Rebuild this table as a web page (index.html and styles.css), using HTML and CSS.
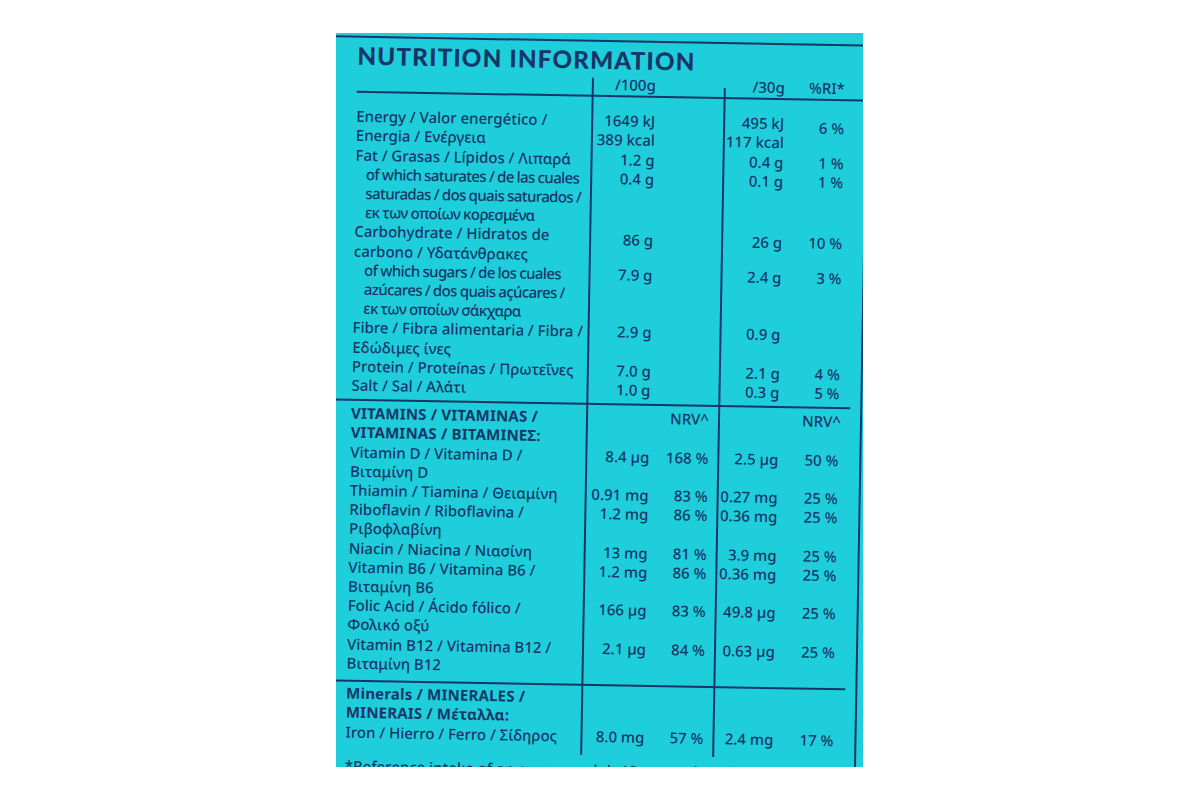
FILE: index.html
```html
<!DOCTYPE html>
<html lang="en">
<head>
<meta charset="utf-8">
<title>Nutrition information</title>
<link rel="stylesheet" href="styles.css">
</head>
<body>
<div class="panel">
  <div class="sheet">
    <div class="topline"></div>
    <h1 class="title">NUTRITION INFORMATION</h1>
    <div class="table">
      <div class="row head">
        <div class="a">/100g</div>
        <div class="b">/30g</div>
        <div class="c">%RI*</div>
      </div>

      <div class="section">
        <div class="row">
          <div class="label">Energy / Valor energético /<br>Energia / Ενέργεια</div>
          <div class="a">1649 kJ<br>389 kcal</div>
          <div class="b">495 kJ<br>117 kcal</div>
          <div class="c down3">6 %</div>
        </div>
        <div class="row">
          <div class="label">Fat / Grasas / Lípidos / Λιπαρά</div>
          <div class="a">1.2 g</div>
          <div class="b">0.4 g</div>
          <div class="c">1 %</div>
        </div>
        <div class="row">
          <div class="label sub">of which saturates / de las cuales<br>saturadas / dos quais saturados /<br>εκ των οποίων κορεσμένα</div>
          <div class="a">0.4 g</div>
          <div class="b">0.1 g</div>
          <div class="c">1 %</div>
        </div>
        <div class="row">
          <div class="label">Carbohydrate / Hidratos de<br>carbono / Υδατάνθρακες</div>
          <div class="a down4">86 g</div>
          <div class="b down4">26 g</div>
          <div class="c down4">10 %</div>
        </div>
        <div class="row">
          <div class="label sub">of which sugars / de los cuales<br>azúcares / dos quais açúcares /<br>εκ των οποίων σάκχαρα</div>
          <div class="a">7.9 g</div>
          <div class="b">2.4 g</div>
          <div class="c">3 %</div>
        </div>
        <div class="row">
          <div class="label">Fibre / Fibra alimentaria / Fibra /<br>Εδώδιμες ίνες</div>
          <div class="a">2.9 g</div>
          <div class="b">0.9 g</div>
        </div>
        <div class="row">
          <div class="label">Protein / Proteínas / Πρωτεΐνες</div>
          <div class="a">7.0 g</div>
          <div class="b">2.1 g</div>
          <div class="c">4 %</div>
        </div>
        <div class="row">
          <div class="label">Salt / Sal / Αλάτι</div>
          <div class="a">1.0 g</div>
          <div class="b">0.3 g</div>
          <div class="c">5 %</div>
        </div>
      </div>

      <div class="sep sep-vit"></div>

      <div class="section">
        <div class="row">
          <div class="label strong">VITAMINS / VITAMINAS /<br>VITAMINAS / ΒΙΤΑΜΙΝΕΣ:</div>
          <div class="n">NRV^</div>
          <div class="c nrv">NRV^</div>
        </div>
        <div class="row">
          <div class="label">Vitamin D / Vitamina D /<br>Βιταμίνη D</div>
          <div class="a">8.4 µg</div>
          <div class="n">168 %</div>
          <div class="b">2.5 µg</div>
          <div class="c">50 %</div>
        </div>
        <div class="row">
          <div class="label">Thiamin / Tiamina / Θειαμίνη</div>
          <div class="a">0.91 mg</div>
          <div class="n">83 %</div>
          <div class="b">0.27 mg</div>
          <div class="c">25 %</div>
        </div>
        <div class="row">
          <div class="label">Riboflavin / Riboflavina /<br>Ριβοφλαβίνη</div>
          <div class="a">1.2 mg</div>
          <div class="n">86 %</div>
          <div class="b">0.36 mg</div>
          <div class="c">25 %</div>
        </div>
        <div class="row">
          <div class="label">Niacin / Niacina / Νιασίνη</div>
          <div class="a">13 mg</div>
          <div class="n">81 %</div>
          <div class="b">3.9 mg</div>
          <div class="c">25 %</div>
        </div>
        <div class="row">
          <div class="label">Vitamin B6 / Vitamina B6 /<br>Βιταμίνη B6</div>
          <div class="a">1.2 mg</div>
          <div class="n">86 %</div>
          <div class="b">0.36 mg</div>
          <div class="c">25 %</div>
        </div>
        <div class="row">
          <div class="label">Folic Acid / Ácido fólico /<br>Φολικό οξύ</div>
          <div class="a">166 µg</div>
          <div class="n">83 %</div>
          <div class="b">49.8 µg</div>
          <div class="c">25 %</div>
        </div>
        <div class="row">
          <div class="label">Vitamin B12 / Vitamina B12 /<br>Βιταμίνη B12</div>
          <div class="a">2.1 µg</div>
          <div class="n">84 %</div>
          <div class="b">0.63 µg</div>
          <div class="c">25 %</div>
        </div>
      </div>

      <div class="sep sep-min"></div>

      <div class="section">
        <div class="row">
          <div class="label strong">Minerals / MINERALES /<br>MINERAIS / Μέταλλα:</div>
        </div>
        <div class="row">
          <div class="label">Iron / Hierro / Ferro / Σίδηρος</div>
          <div class="a">8.0 mg</div>
          <div class="n">57 %</div>
          <div class="b">2.4 mg</div>
          <div class="c">17 %</div>
        </div>
      </div>
    </div>
    <p class="footnote">*Reference intake of an average adult / Ingesta de referencia de un adulto medio (8400 kJ / 2000 kcal)</p>
  </div>
</div>
</body>
</html>
```
FILE: styles.css
```css
:root {
  --teal: #1fcedb;
  --ink: #173667;
}

* {
  box-sizing: border-box;
}

body {
  margin: 0;
  background: #ffffff;
}

.panel {
  margin: 33px 0 0 336px;
  width: 527px;
  height: 734px;
  background: var(--teal);
  overflow: hidden;
}

.sheet {
  margin: -13px -20px 0;
  height: 760px;
  transform: rotate(1deg);
  color: var(--ink);
  font-family: "Noto Sans", "DejaVu Sans", sans-serif;
  font-weight: 500;
  font-size: 15px;
  line-height: 19.2px;
  background: linear-gradient(var(--ink), var(--ink)) 544px 0 / 2px 100% no-repeat;
}

.topline {
  height: 2px;
  margin-top: 20px;
  background: var(--ink);
}

.title {
  margin: 3.6px 0 1.8px 35px;
  font-family: Lato, "Noto Sans", sans-serif;
  font-weight: 900;
  font-size: 24.3px;
  line-height: 28px;
  letter-spacing: 1.1px;
}

.table {
  padding: 0 0 9px 35px;
  background:
    linear-gradient(var(--ink), var(--ink)) 270px 3px / 2px calc(100% - 3px) no-repeat,
    linear-gradient(var(--ink), var(--ink)) 402px 11px / 2px calc(100% - 11px) no-repeat;
}

.row {
  display: grid;
  grid-template-columns: 236px 63px 59px 10px 60px 60px;
  align-items: start;
}

.head {
  padding-bottom: 0.8px;
  border-bottom: 2px solid var(--ink);
  margin-bottom: 13.8px;
}

.label {
  grid-column: 1;
  white-space: nowrap;
}

.label.sub {
  padding-left: 10.5px;
  letter-spacing: -0.6px;
  word-spacing: -0.4px;
}

.label.strong {
  font-weight: 700;
  letter-spacing: 0.2px;
}

.a,
.n,
.b,
.c {
  text-align: right;
  white-space: nowrap;
}

.a { grid-column: 2; }
.n { grid-column: 3; }
.b { grid-column: 5; }
.c { grid-column: 6; }

.c.nrv {
  margin-right: -2px;
}

.down3 { padding-top: 3.5px; }
.down4 { padding-top: 4px; }

.sep {
  height: 2px;
  width: 534px;
  margin-left: -35px;
  background: var(--ink);
}

.sep-vit {
  margin-top: 4.2px;
  margin-bottom: 2.8px;
}

.sep-min {
  margin-top: 7.4px;
  margin-bottom: 1.8px;
}

.footnote {
  margin: 6.4px 0 0;
  padding-left: 35px;
  white-space: nowrap;
}
```
